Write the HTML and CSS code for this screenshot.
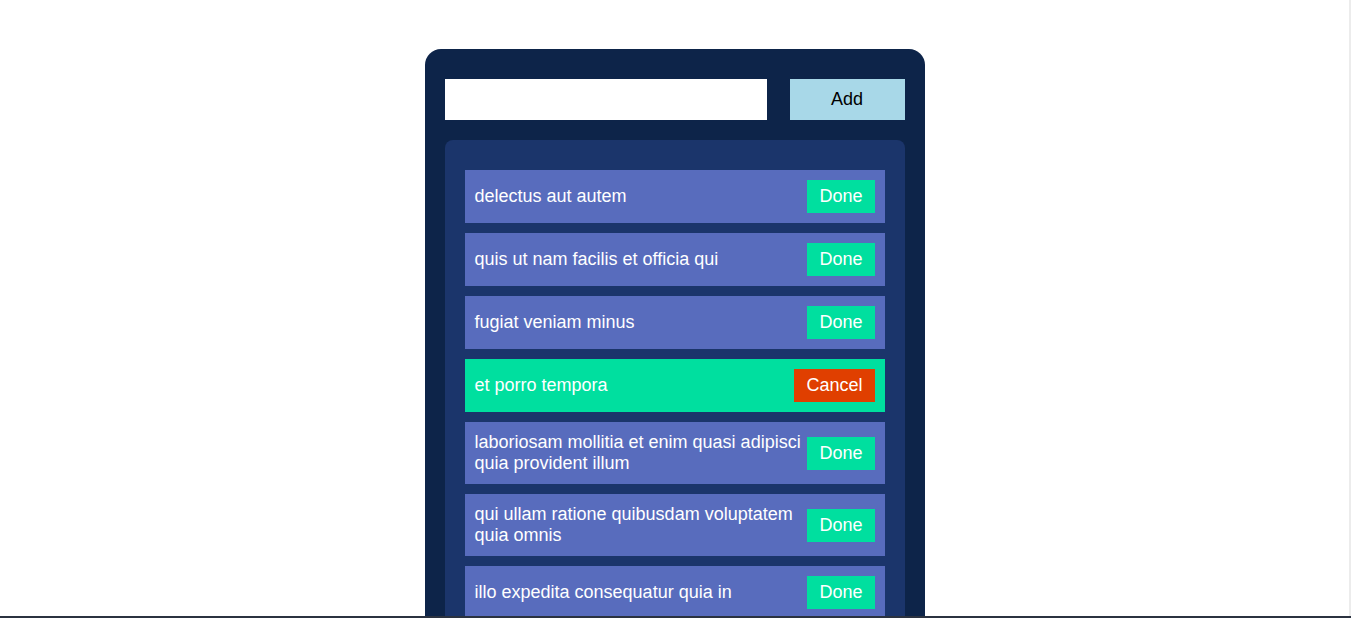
FILE: index.html
```html
<!DOCTYPE html>
<html>
<head>
<meta charset="utf-8">
<link rel="stylesheet" href="styles.css">
</head>
<body>
<div class="app">
  <div class="form">
    <input class="field" type="text">
    <button class="add">Add</button>
  </div>
  <div class="list">
    <div class="item"><span class="label">delectus aut autem</span><button class="btn done">Done</button></div>
    <div class="item"><span class="label">quis ut nam facilis et officia qui</span><button class="btn done">Done</button></div>
    <div class="item"><span class="label">fugiat veniam minus</span><button class="btn done">Done</button></div>
    <div class="item completed"><span class="label">et porro tempora</span><button class="btn cancel">Cancel</button></div>
    <div class="item"><span class="label">laboriosam mollitia et enim quasi adipisci quia provident illum</span><button class="btn done">Done</button></div>
    <div class="item"><span class="label">qui ullam ratione quibusdam voluptatem quia omnis</span><button class="btn done">Done</button></div>
    <div class="item"><span class="label">illo expedita consequatur quia in</span><button class="btn done">Done</button></div>
    <div class="item"><span class="label">quo adipisci enim quam ut ab</span><button class="btn done">Done</button></div>
  </div>
</div>
<div class="edge-right"></div>
<div class="edge-bottom"></div>
</body>
</html>
```
FILE: styles.css
```css
html, body {
  margin: 0;
  padding: 0;
  background: #ffffff;
  font-family: "Liberation Sans", Arial, sans-serif;
  overflow: hidden;
}
body {
  padding-right: 2px;
}
.app {
  width: 460px;
  margin: 49px auto 0;
  padding: 30px 20px 20px;
  background: #0d2449;
  border-radius: 16px;
}
.form {
  display: flex;
  justify-content: space-between;
  height: 41px;
}
.field {
  width: 322px;
  height: 41px;
  box-sizing: border-box;
  border: none;
  outline: none;
  background: #ffffff;
  margin: 0;
  padding: 0 8px;
  font: inherit;
}
.add {
  width: 115px;
  height: 41px;
  border: none;
  background: #a8d8e8;
  color: #000000;
  font-family: "Liberation Sans", Arial, sans-serif;
  font-size: 18px;
  padding: 0;
  margin: 0;
}
.list {
  margin-top: 20px;
  background: #1b356b;
  border-radius: 8px;
  padding: 30px 20px;
  display: flex;
  flex-direction: column;
  gap: 10px;
}
.item {
  display: flex;
  align-items: center;
  justify-content: space-between;
  padding: 10px;
  background: #586cbd;
  color: #ffffff;
  font-size: 18px;
  line-height: 21px;
}
.item.completed {
  background: #00df9f;
}
.label {
  flex: 1;
}
.btn {
  border: none;
  margin: 0;
  padding: 6px 12px;
  font-family: "Liberation Sans", Arial, sans-serif;
  font-size: 18px;
  line-height: 21px;
  color: #ffffff;
  flex: none;
}
.done {
  background: #00df9f;
}
.cancel {
  background: #e03f00;
}
.edge-right {
  position: fixed;
  top: 0;
  right: 0;
  width: 2px;
  height: 100%;
  background: #ececec;
}
.edge-bottom {
  position: fixed;
  left: 0;
  bottom: 0;
  width: 100%;
  height: 2px;
  background: #2b3240;
}
```
